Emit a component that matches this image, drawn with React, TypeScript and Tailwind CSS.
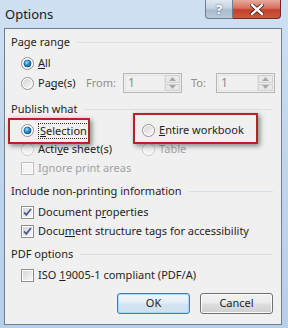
import React from "react";

const font = "font-['Noto_Sans',sans-serif]";

function Radio({ checked = false, disabled = false }: { checked?: boolean; disabled?: boolean }) {
  const ring = disabled ? "#c6c6c6" : "#8e8f8f";
  return (
    <svg width="13" height="13" viewBox="0 0 13 13" className="shrink-0">
      <defs>
        <linearGradient id="rbg" x1="0" y1="0" x2="1" y2="1">
          <stop offset="0" stopColor="#d4d4d4" />
          <stop offset="1" stopColor="#f8f8f8" />
        </linearGradient>
        <radialGradient id="rdot" cx="0.4" cy="0.35" r="0.7">
          <stop offset="0" stopColor="#9fe0ff" />
          <stop offset="0.5" stopColor="#2a8fd0" />
          <stop offset="1" stopColor="#0d4f86" />
        </radialGradient>
      </defs>
      <circle cx="6.5" cy="6.5" r="6" fill="#ffffff" stroke={ring} strokeWidth="1" />
      {checked ? (
        <circle cx="6.5" cy="6.5" r="3.6" fill="url(#rdot)" stroke="#1b4f7a" strokeWidth="0.6" />
      ) : (
        <circle cx="6.5" cy="6.5" r="4.5" fill={disabled ? "#f3f3f3" : "url(#rbg)"} />
      )}
    </svg>
  );
}

function Check({ checked = false, disabled = false }: { checked?: boolean; disabled?: boolean }) {
  return (
    <svg width="13" height="13" viewBox="0 0 13 13" className="shrink-0">
      <defs>
        <linearGradient id="cbg" x1="0" y1="0" x2="1" y2="1">
          <stop offset="0" stopColor="#d6d6d6" />
          <stop offset="1" stopColor="#f8f8f8" />
        </linearGradient>
      </defs>
      <rect x="0.5" y="0.5" width="12" height="12" fill="#ffffff" stroke={disabled ? "#bdbdbd" : "#8e8f8f"} />
      <rect x="2" y="2" width="9" height="9" fill={disabled ? "#f4f4f4" : "url(#cbg)"} />
      {checked && (
        <path d="M3 6.3 L5.3 8.8 L10 3" fill="none" stroke="#4a5c94" strokeWidth="1.8" />
      )}
    </svg>
  );
}

function Spinner() {
  return (
    <div className="flex h-[20px] w-[59px] border border-[#b5b5b5] bg-[#f0f0f0] p-px">
      <div className="flex flex-1 items-center border border-[#e3e3e3] bg-[#f0f0f0] pl-[2px] text-[12px] text-[#8d8d8d]">1</div>
      <div className="flex w-[15px] flex-col gap-px">
        <div className="flex flex-1 items-center justify-center border border-[#d0d0d0] bg-[#e9e9e9]">
          <svg width="7" height="4" viewBox="0 0 7 4"><path d="M0 4 L3.5 0 L7 4 Z" fill="#a8a8a8" /></svg>
        </div>
        <div className="flex flex-1 items-center justify-center border border-[#d0d0d0] bg-[#e9e9e9]">
          <svg width="7" height="4" viewBox="0 0 7 4"><path d="M0 0 L3.5 4 L7 0 Z" fill="#a8a8a8" /></svg>
        </div>
      </div>
    </div>
  );
}

function Header({ children }: { children: React.ReactNode }) {
  return (
    <div className="flex h-[14px] items-center gap-[7px] pr-[6px]">
      <span className="whitespace-nowrap text-[11px] leading-[14px] text-[#1e1e1e]">{children}</span>
      <div className="h-px flex-1 bg-[#d5dfe5]" />
    </div>
  );
}

function RedBox({ className }: { className: string }) {
  return (
    <div
      className={`pointer-events-none absolute border-2 border-[#b8202a] shadow-[2px_2px_5px_rgba(0,0,0,0.45)] ${className}`}
    />
  );
}

export default function App() {
  return (
    <div className={`${font} relative h-[328px] w-[288px] overflow-hidden bg-[linear-gradient(180deg,#cfe0f2_0%,#c2d7ee_40%,#b7cfe9_100%)] text-[11px] text-[#1e1e1e]`}>
      {/* title bar */}
      <div className="flex h-[28px] items-start">
        <div className="pl-[5px] pt-[5px] text-[13px] leading-[18px] text-[#1b1b1b]">Options</div>
        <div className="ml-auto mr-[7px] flex h-[19px]">
          <div className="flex w-[28px] items-center justify-center rounded-bl-[4px] border border-t-0 border-[#6d7f95] bg-[linear-gradient(180deg,#dfe8f2_0%,#c5d3e3_45%,#aabbd0_55%,#b9c9db_100%)] text-[13px] font-bold leading-none text-white [text-shadow:0_0_2px_#3b4a5e]">
            ?
          </div>
          <div className="flex w-[48px] items-center justify-center rounded-br-[4px] border border-l-0 border-t-0 border-[#6e2a22] bg-[linear-gradient(180deg,#e9a99c_0%,#d7705e_45%,#c2412a_55%,#cc5a3f_100%)]">
            <svg width="14" height="11" viewBox="0 0 14 11">
              <path d="M2 1 L12 10 M12 1 L2 10" stroke="#3b1b16" strokeWidth="4" strokeLinecap="square" />
              <path d="M2 1 L12 10 M12 1 L2 10" stroke="#ffffff" strokeWidth="2.4" strokeLinecap="square" />
            </svg>
          </div>
        </div>
      </div>

      {/* client */}
      <div className="ml-[4px] mr-[6px] flex h-[297px] flex-col border border-[#6f7f8e] bg-[#f0f0f0] pl-[6px] pr-[2px]">
        <div className="h-[6px]" />
        <Header>Page range</Header>
        <div className="h-[5px]" />
        <div className="flex h-[18px] items-center gap-[4px] pl-[10px]">
          <Radio checked />
          <span>
            <u>A</u>ll
          </span>
        </div>
        <div className="h-px" />
        <div className="flex h-[20px] items-center pl-[10px]">
          <div className="flex w-[65px] items-center gap-[4px]">
            <Radio />
            <span>
              Pa<u>g</u>e(s)
            </span>
          </div>
          <span className="w-[37px] text-[#8d8d8d]">From:</span>
          <Spinner />
          <span className="ml-[9px] w-[25px] text-[#8d8d8d]">To:</span>
          <Spinner />
        </div>
        <div className="h-[9px]" />
        <Header>Publish what</Header>
        <div className="h-[5px]" />
        <div className="flex h-[19px] items-center pl-[10px]">
          <div className="relative flex w-[121px] items-center gap-[4px]">
            <RedBox className="left-[-13px] top-[-5px] h-[26px] w-[82px]" />
            <Radio checked />
            <span className="border border-dotted border-[#333] px-px leading-[14px]">
              <u>S</u>election
            </span>
          </div>
          <div className="relative flex items-center gap-[4px]">
            <RedBox className="left-[-9px] top-[-9px] h-[31px] w-[125px]" />
            <Radio />
            <span>
              <u>E</u>ntire workbook
            </span>
          </div>
        </div>
        <div className="flex h-[19px] items-center pl-[10px]">
          <div className="flex w-[121px] items-center gap-[4px]">
            <Radio disabled />
            <span>
              Acti<u>v</u>e sheet(s)
            </span>
          </div>
          <div className="flex items-center gap-[4px] text-[#a0a0a0]">
            <Radio disabled />
            <span>Table</span>
          </div>
        </div>
        <div className="flex h-[19px] items-center gap-[4px] pl-[10px] text-[#a0a0a0]">
          <Check disabled />
          <span>Ignore print areas</span>
        </div>
        <div className="h-[6px]" />
        <Header>Include non-printing information</Header>
        <div className="h-[5px]" />
        <div className="flex h-[19px] items-center gap-[4px] pl-[10px]">
          <Check checked />
          <span>
            Document p<u>r</u>operties
          </span>
        </div>
        <div className="flex h-[19px] items-center gap-[4px] pl-[10px]">
          <Check checked />
          <span>
            Docu<u>m</u>ent structure tags for accessibility
          </span>
        </div>
        <div className="h-[6px]" />
        <Header>PDF options</Header>
        <div className="h-[5px]" />
        <div className="flex h-[19px] items-center gap-[4px] pl-[10px]">
          <Check />
          <span>
            ISO <u>1</u>9005-1 compliant (PDF/A)
          </span>
        </div>
        <div className="h-[8px]" />
        <div className="flex h-[21px] justify-end gap-[10px] pr-[6px]">
          <button className="w-[73px] rounded-[3px] border border-[#3c7fb1] bg-[linear-gradient(180deg,#f4f8fb_0%,#e5eef5_45%,#d3e3ef_55%,#cfe0ec_100%)] text-[11px] shadow-[inset_0_0_0_1px_#a8d8f4]">
            OK
          </button>
          <button className="w-[73px] rounded-[3px] border border-[#707070] bg-[linear-gradient(180deg,#f2f2f2_0%,#ebebeb_45%,#dddddd_55%,#cfcfcf_100%)] text-[11px] shadow-[inset_0_0_0_1px_#fcfcfc]">
            Cancel
          </button>
        </div>
      </div>
    </div>
  );
}
